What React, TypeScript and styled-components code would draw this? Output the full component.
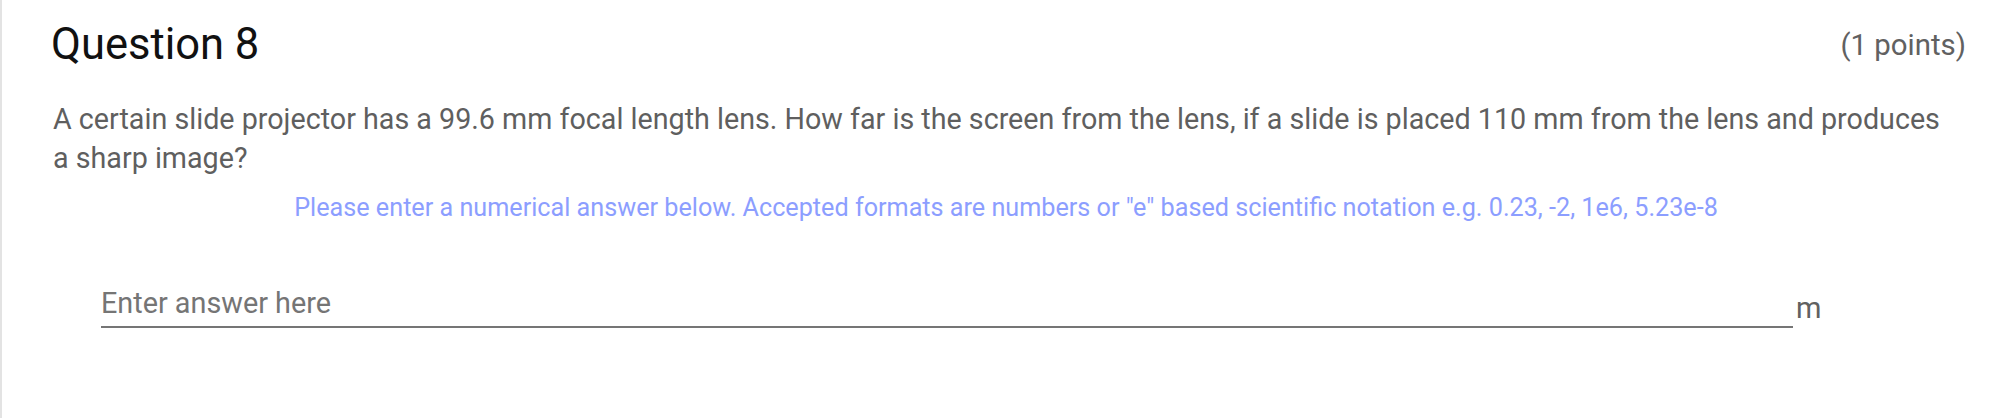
import React from "react";
import styled, { createGlobalStyle } from "styled-components";

const GlobalStyle = createGlobalStyle`
  html, body {
    margin: 0;
    padding: 0;
    background: #ffffff;
  }
  body {
    font-family: Roboto, "Liberation Sans", Arial, sans-serif;
  }
  * { box-sizing: border-box; }
`;

const Card = styled.section`
  height: 418px;
  border-left: 2px solid #e3e3e3;
  padding: 20px 24px 0 49px;
  background: #fff;
  display: flex;
  flex-direction: column;
`;

const Header = styled.header`
  display: flex;
  justify-content: space-between;
  align-items: flex-start;
`;

const Title = styled.h2`
  margin: 0;
  font-size: 43.5px;
  line-height: 50px;
  font-weight: 400;
  color: #111111;
`;

const Points = styled.span`
  margin-top: 8px;
  font-size: 29.4px;
  line-height: 34px;
  color: #616161;
`;

const Prompt = styled.p`
  margin: 30px 14px 0 2px;
  font-size: 28.7px;
  line-height: 39px;
  color: #5f5f5f;
`;

const Hint = styled.p`
  margin: 15px 5px 0 0;
  font-size: 25.2px;
  line-height: 30px;
  text-align: center;
  color: #8c9eff;
`;

const AnswerRow = styled.div`
  margin: 57px 0 0 50px;
  display: flex;
  align-items: flex-end;
  gap: 3px;
`;

const AnswerInput = styled.input`
  width: 1692px;
  height: 48px;
  padding: 0;
  border: none;
  border-bottom: 2px solid #757575;
  outline: none;
  background: transparent;
  font-family: Roboto, "Liberation Sans", Arial, sans-serif;
  font-size: 28.8px;
  color: #424242;
  &::placeholder {
    color: #757575;
    opacity: 1;
  }
`;

const Unit = styled.span`
  font-size: 29px;
  line-height: 29px;
  margin-bottom: 5px;
  color: #616161;
`;

export default function App() {
  return (
    <>
      <GlobalStyle />
      <Card>
        <Header>
          <Title>Question 8</Title>
          <Points>(1 points)</Points>
        </Header>
        <Prompt>
          A certain slide projector has a 99.6 mm focal length lens. How far is the screen from the lens, if a slide is placed 110 mm from the lens and produces a sharp image?
        </Prompt>
        <Hint>
          Please enter a numerical answer below. Accepted formats are numbers or "e" based scientific notation e.g. 0.23, -2, 1e6, 5.23e-8
        </Hint>
        <AnswerRow>
          <AnswerInput type="text" placeholder="Enter answer here" />
          <Unit>m</Unit>
        </AnswerRow>
      </Card>
    </>
  );
}
